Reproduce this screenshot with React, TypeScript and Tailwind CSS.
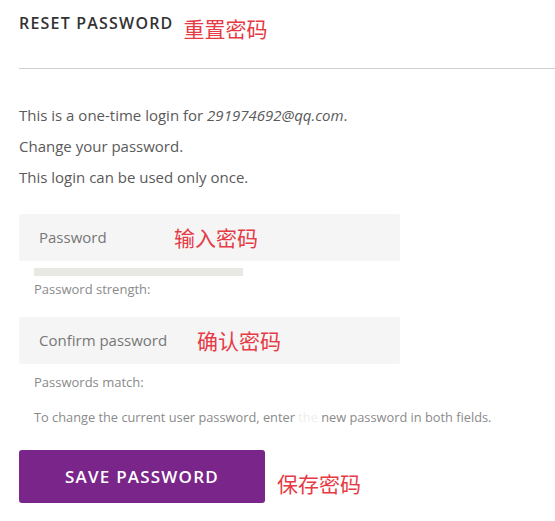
export default function App() {
  const font = { fontFamily: '"Open Sans", "Noto Sans CJK SC", sans-serif' };
  return (
    <div className="min-h-[521px] w-[555px] bg-white pl-[19px] text-[#555]" style={font}>
      <div className="flex items-start pt-[12px]">
        <h1 className="text-[16px] font-semibold leading-[22px] tracking-[1.2px] text-[#333]">RESET PASSWORD</h1>
        <span className="ml-[10px] mt-[3px] text-[21px] leading-[28px] text-[#e63a45]">重置密码</span>
      </div>
      <div className="mt-[25px] h-px bg-[#cfcfcf]" />

      <div className="mt-[35px] flex flex-col gap-[9px] text-[15px] leading-[22px] text-[#5a5a5a]">
        <p>
          This is a one-time login for <em>291974692@qq.com</em>.
        </p>
        <p>Change your password.</p>
        <p>This login can be used only once.</p>
      </div>

      <div className="mt-[26px] w-[381px]">
        <div className="flex h-[47px] items-center rounded-[2px] bg-[#f5f5f5] pl-[20px]">
          <span className="w-[135px] text-[15px] text-[#777]">Password</span>
          <span className="mt-[3px] text-[21px] text-[#e63a45]">输入密码</span>
        </div>
        <div className="ml-[15px] mt-[7px] h-[8px] w-[209px] bg-[#e9e9e4]" />
        <p className="ml-[15px] mt-[4px] text-[13px] leading-[18px] text-[#8a8a8a]">Password strength:</p>

        <div className="mt-[19px] flex h-[47px] items-center rounded-[2px] bg-[#f5f5f5] pl-[20px]">
          <span className="w-[158px] text-[15px] text-[#777]">Confirm password</span>
          <span className="mt-[3px] text-[21px] text-[#e63a45]">确认密码</span>
        </div>
        <p className="ml-[15px] mt-[9px] text-[13px] leading-[18px] text-[#8a8a8a]">Passwords match:</p>
      </div>

      <p className="ml-[15px] mt-[17px] whitespace-nowrap text-[12.8px] leading-[18px] text-[#8a8a8a]">
        To change the current user password, enter <span className="text-[#eeeeee]">the</span> new password in both fields.
      </p>

      <div className="mt-[24px] flex items-end">
        <button className="h-[53px] w-[246px] rounded-[3px] bg-[#7a2589] text-[17px] font-semibold tracking-[1.2px] text-white">
          SAVE PASSWORD
        </button>
        <span className="mb-[5px] ml-[12px] text-[21px] leading-[28px] text-[#e63a45]">保存密码</span>
      </div>
    </div>
  );
}
